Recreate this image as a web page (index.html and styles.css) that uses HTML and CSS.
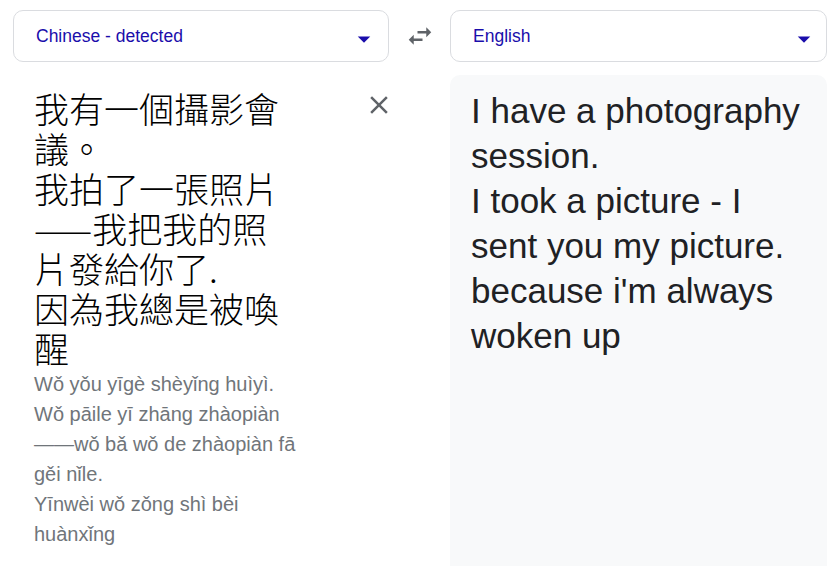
FILE: index.html
```html
<!DOCTYPE html>
<html lang="en">
<head>
<meta charset="utf-8">
<title>Translate</title>
<link rel="stylesheet" href="styles.css">
</head>
<body>
<div class="app">
  <div class="lang">
    <span class="lang-name">Chinese - detected</span>
    <svg class="drop" viewBox="0 0 24 24" width="30" height="30"><path d="M7 10l5 5 5-5z"/></svg>
  </div>
  <div class="swap">
    <svg viewBox="0 0 24 24" width="30" height="30"><path d="M6.99 11L3 15l3.99 4v-3H14v-2H6.99v-3zM21 9l-3.99-4v3H10v2h7.01v3L21 9z"/></svg>
  </div>
  <div class="lang lang-right">
    <span class="lang-name">English</span>
    <svg class="drop" viewBox="0 0 24 24" width="30" height="30"><path d="M7 10l5 5 5-5z"/></svg>
  </div>

  <div class="source">
    <div class="source-col">
      <div class="src-text">我有一個攝影會議。<br>我拍了一張照片——我把我的照片發給你了.<br>因為我總是被喚醒</div>
      <div class="pinyin">Wǒ yǒu yīgè shèyǐng huìyì.<br>Wǒ pāile yī zhāng zhàopiàn ——wǒ bǎ wǒ de zhàopiàn fā gěi nǐle.<br>Yīnwèi wǒ zǒng shì bèi huànxǐng</div>
    </div>
    <div class="clear">
      <svg viewBox="0 0 24 24" width="30" height="30"><path d="M19 6.41L17.59 5 12 10.59 6.41 5 5 6.41 10.59 12 5 17.59 6.41 19 12 13.41 17.59 19 19 17.59 13.41 12z"/></svg>
    </div>
  </div>
  <div class="target">I have a photography session.<br>I took a picture - I sent you my picture.<br>because i'm always woken up</div>
</div>
</body>
</html>
```

FILE: styles.css
```css
html, body {
  margin: 0;
  padding: 0;
  background: #ffffff;
  overflow: hidden;
}

.app {
  display: grid;
  grid-template-columns: 376px 61px 377px;
  grid-template-rows: 52px 491px;
  row-gap: 13px;
  padding: 10px 0 0 13px;
  font-family: "Liberation Sans", Arial, sans-serif;
}

.lang {
  box-sizing: border-box;
  height: 52px;
  border: 1px solid #dadce0;
  border-radius: 10px;
  display: flex;
  align-items: center;
  padding: 0 9px 0 22px;
}

.lang-right {
  padding-right: 7px;
}

.lang-name {
  flex: 1;
  font-size: 17.5px;
  color: #1a0dab;
}

.drop {
  fill: #1a0dab;
  margin-top: 5px;
}

.swap {
  display: flex;
  justify-content: center;
  align-items: center;
}

.swap svg {
  fill: #5f6368;
}

.source {
  display: flex;
  align-items: flex-start;
  padding: 13px 0 0 21px;
}

.source-col {
  flex: 0 0 270px;
  width: 270px;
}

.src-text {
  margin-right: 8px;
  font-family: "Noto Sans CJK TC", "Noto Sans CJK SC", sans-serif;
  font-weight: 300;
  font-size: 35px;
  line-height: 40px;
  color: #000000;
}

.pinyin {
  margin-top: 1px;
  font-size: 20px;
  line-height: 30px;
  color: #70757a;
}

.clear {
  flex: 0 0 30px;
  margin-left: 60px;
  margin-top: 2px;
  width: 30px;
  height: 30px;
}

.clear svg {
  fill: #5f6368;
  display: block;
}

.target {
  grid-column: 3;
  background: #f8f9fa;
  border-radius: 10px 10px 0 0;
  padding: 13px 20px 0 21px;
  font-size: 35px;
  line-height: 45px;
  color: #202124;
}
```
